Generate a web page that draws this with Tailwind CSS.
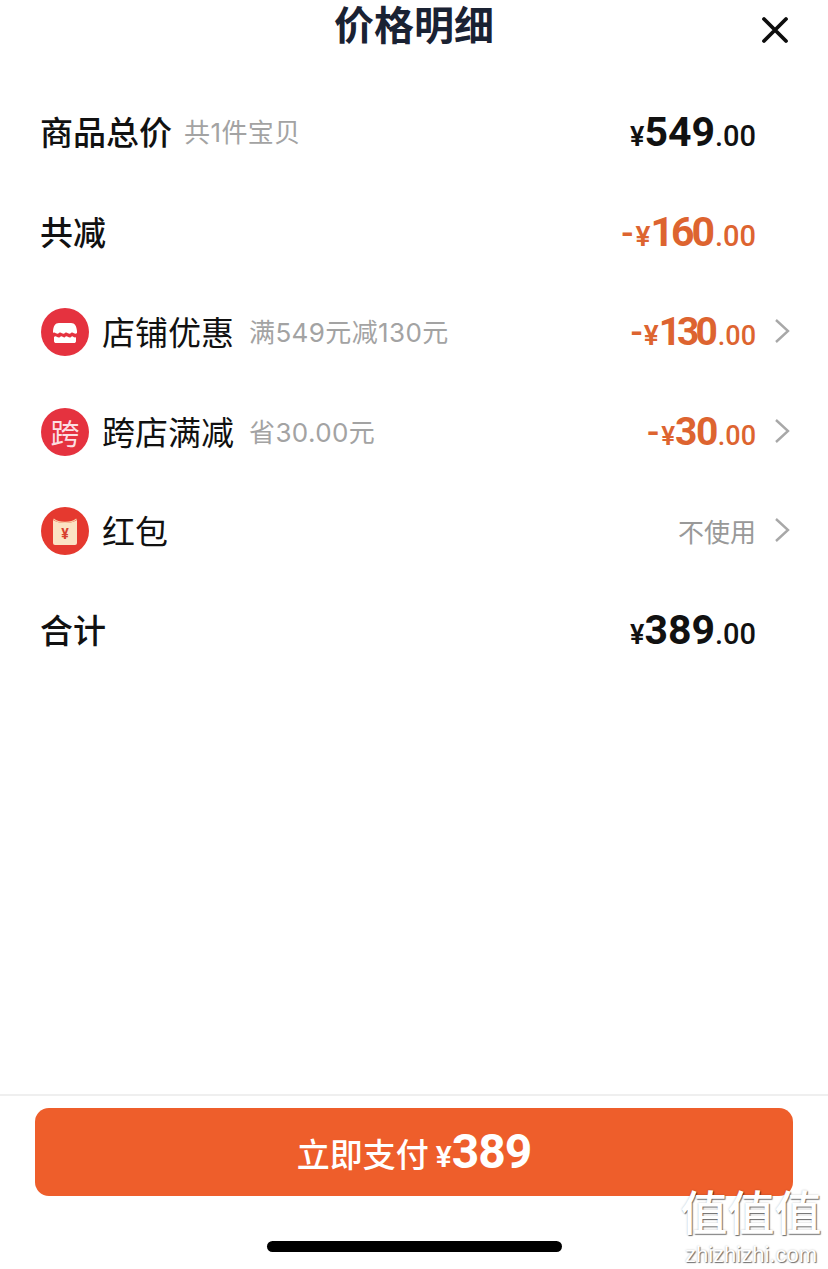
<!DOCTYPE html>
<html lang="en">
<head>
    <meta charset="UTF-8">
    <title>价格明细</title>
    <script src="https://cdn.jsdelivr.net/npm/@tailwindcss/browser@4"></script>
</head>
<body class="bg-white">
<div class="relative w-[828px] h-[1269px] overflow-hidden flex flex-col bg-white text-[#111] font-['Noto_Sans_CJK_SC',sans-serif]">

    <!-- Header -->
    <div class="relative h-[82px] shrink-0">
        <h1 class="pt-[3px] text-center text-[40px] leading-[40px] font-semibold text-[#1a2233]">价格明细</h1>
        <svg class="absolute left-[759px] top-[14px]" width="32" height="32" viewBox="0 0 32 32" fill="none" stroke="#0d0d0d" stroke-width="3.8" stroke-linecap="round"><path d="M5 5 L27 27 M27 5 L5 27"/></svg>
    </div>

    <!-- Rows -->
    <div class="flex flex-col pl-[41px] pr-[38px]">
        <div class="flex items-center h-[100px]">
            <span class="-ml-[1px] text-[33px] font-medium">商品总价</span>
            <span class="ml-[12px] text-[26px] tracking-[0.4px] text-[#a3a3a3] font-['Inter','Noto_Sans_CJK_SC',sans-serif]">共1件宝贝</span>
            <span class="ml-auto mr-[34px] flex items-baseline translate-y-[1px] font-semibold text-[#111] font-['Roboto',sans-serif]">
                <span class="text-[27px]">¥</span><span class="text-[41px] font-bold">549</span><span class="text-[29px] font-medium">.00</span>
            </span>
        </div>
        <div class="flex items-center h-[100px]">
            <span class="-ml-[1px] text-[33px] font-medium">共减</span>
            <span class="ml-auto mr-[34px] flex items-baseline translate-y-[1px] font-semibold text-[#dd6430] font-['Roboto',sans-serif]">
                <span class="text-[36px] font-medium leading-none mr-[2px]">-</span><span class="text-[28px]">¥</span><span class="text-[41px] font-bold tracking-[-3px] mr-[3px]">160</span><span class="text-[29px] font-medium">.00</span>
            </span>
        </div>
        <div class="flex items-center h-[100px]">
            <svg width="48" height="48" viewBox="0 0 48 48" class="shrink-0"><circle cx="24" cy="24" r="24" fill="#e5323f"/><path d="M12 23 C12.500 18 14 15 18 15 H30 C34 15 35.500 18 36 23 V25 C34 27.500 32 23 30 25 C28 27.500 26 23 24 25 C22 27.500 20 23 18 25 C16 27.500 14 23 12 25 Z" fill="#fff"/><path d="M13 29 C15 26.500 17 31 19 29 C21 26.500 23 31 24 29 C26 26.500 28 31 30 29 C32 26.500 33 31 35 29 V33 C35 34.500 34 35 33 35 H15 C14 35 13 34.500 13 33 Z" fill="#fff"/></svg>
            <span class="ml-[13px] text-[33px]">店铺优惠</span>
            <span class="ml-[15px] text-[26px] tracking-[0.4px] text-[#a3a3a3] font-['Inter','Noto_Sans_CJK_SC',sans-serif]">满549元减130元</span>
            <span class="ml-auto flex items-baseline font-semibold text-[#dd6430] font-['Roboto',sans-serif]">
                <span class="text-[36px] font-medium leading-none mr-[1px]">-</span><span class="text-[28px]">¥</span><span class="text-[39px] font-bold tracking-[-4px] mr-[4px]">130</span><span class="text-[27px] font-medium">.00</span>
            </span>
            <svg class="ml-[18px] -translate-y-[1px]" width="16" height="26" viewBox="0 0 16 26" fill="none" stroke="#a8a8a8" stroke-width="2.4"><path d="M2 2 L14 13 L2 24"/></svg>
        </div>
        <div class="flex items-center h-[100px]">
            <span class="w-[48px] h-[48px] shrink-0 rounded-full bg-[#e5323f] flex items-center justify-center text-[29px] leading-none text-[#fbdfe2]">跨</span>
            <span class="ml-[13px] text-[33px]">跨店满减</span>
            <span class="ml-[15px] text-[26px] tracking-[0.4px] text-[#a3a3a3] font-['Inter','Noto_Sans_CJK_SC',sans-serif]">省30.00元</span>
            <span class="ml-auto flex items-baseline font-semibold text-[#dd6430] font-['Roboto',sans-serif]">
                <span class="text-[36px] font-medium leading-none mr-[2px]">-</span><span class="text-[26px]">¥</span><span class="text-[39px] font-bold tracking-[-1.5px] mr-[1px]">30</span><span class="text-[27px] font-medium">.00</span>
            </span>
            <svg class="ml-[18px] -translate-y-[1px]" width="16" height="26" viewBox="0 0 16 26" fill="none" stroke="#a8a8a8" stroke-width="2.4"><path d="M2 2 L14 13 L2 24"/></svg>
        </div>
        <div class="flex items-center h-[98px]">
            <svg width="48" height="48" viewBox="0 0 48 48" class="shrink-0"><circle cx="24" cy="24" r="24" fill="#e5392f"/><rect x="12" y="9" width="24" height="29" rx="2" fill="#fbe3c4"/><path d="M12 9 H36 V13 C30 17 18 17 12 13 Z" fill="#e5392f"/><path d="M12.500 12 C18 16.500 30 16.500 35.500 12" fill="none" stroke="#f7cfa8" stroke-width="1.200"/><text x="24" y="32" text-anchor="middle" font-size="14" font-weight="700" fill="#d8402f" font-family="Roboto">¥</text></svg>
            <span class="ml-[13px] text-[33px]">红包</span>
            <span class="ml-auto text-[26px] text-[#999] -translate-y-[1px]">不使用</span>
            <svg class="ml-[18px] -translate-y-[1px]" width="16" height="26" viewBox="0 0 16 26" fill="none" stroke="#a8a8a8" stroke-width="2.4"><path d="M2 2 L14 13 L2 24"/></svg>
        </div>
        <div class="flex items-center h-[100px]">
            <span class="-ml-[1px] text-[33px] font-medium">合计</span>
            <span class="ml-auto mr-[34px] flex items-baseline translate-y-[1px] font-semibold text-[#111] font-['Roboto',sans-serif]">
                <span class="text-[27px]">¥</span><span class="text-[41px] font-bold">389</span><span class="text-[29px] font-medium">.00</span>
            </span>
        </div>
    </div>

    <!-- Footer -->
    <div class="mt-auto h-[175px] shrink-0 border-t-2 border-[#efefef] pt-[12px] px-[35px]">
        <button class="w-[758px] h-[88px] rounded-[14px] bg-[#ee5e2b] text-white flex items-center justify-center font-medium">
            <span class="text-[33px] translate-y-[2px]">立即支付</span>
            <span class="ml-[7px] text-[30px] font-semibold font-['Roboto',sans-serif] translate-y-[4px]">¥</span>
            <span class="text-[48px] font-bold leading-none tracking-[-1px] font-['Roboto',sans-serif]">389</span>
        </button>
        <div class="mt-[45px] mx-auto w-[295px] h-[11px] rounded-full bg-black"></div>
    </div>

    <!-- Watermark -->
    <div class="absolute left-[676px] top-[1186px] w-[150px] text-center text-white [text-shadow:1px_1px_1px_rgba(0,0,0,0.55),0_0_2px_rgba(0,0,0,0.25)]">
        <div class="text-[47px] leading-[47px] font-medium">值值值</div>
        <div class="mt-[11px] text-[22px] leading-[22px] font-['Liberation_Sans',sans-serif]">zhizhizhi.com</div>
    </div>
</div>
</body>
</html>
